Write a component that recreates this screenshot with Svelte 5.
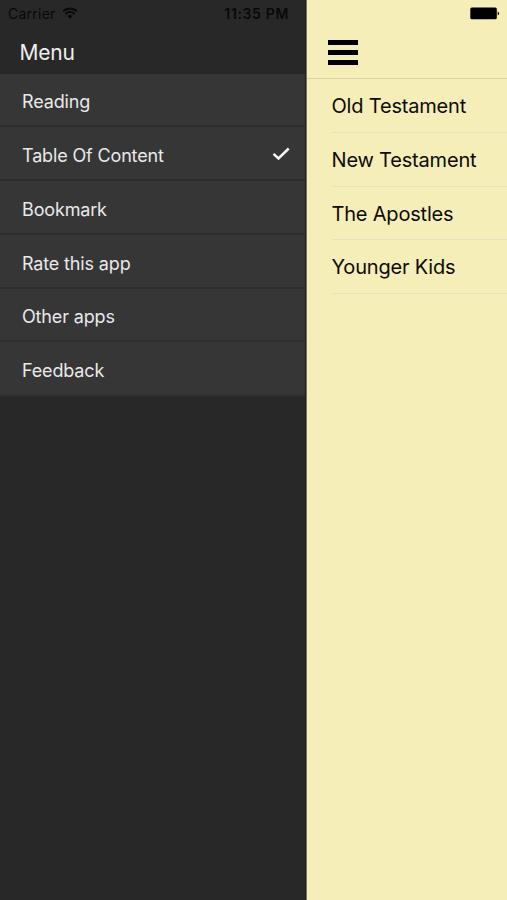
<script lang="ts">
	const menuItems = ['Reading', 'Table Of Content', 'Bookmark', 'Rate this app', 'Other apps', 'Feedback'];
	const sections = ['Old Testament', 'New Testament', 'The Apostles', 'Younger Kids'];

	let selected = $state('Table Of Content');
	let menuOpen = $state(true);
</script>

<div class="screen">
	{#if menuOpen}
		<aside class="drawer">
			<div class="status">
				<span class="carrier">Carrier</span>
				<svg class="wifi" viewBox="0 0 16 12" width="16" height="12">
					<path d="M1 4.3C5 .5 11 .5 15 4.3M3.5 6.9c2.7-2.5 6.3-2.5 9 0" />
					<path class="dot" d="M5.4 9.1c1.5-1.4 3.7-1.4 5.2 0L8 11.7z" />
				</svg>
				<span class="time">11:35 PM</span>
			</div>
			<h1 class="title">Menu</h1>
			<nav class="menu">
				{#each menuItems as item}
					<button class="menu-item" onclick={() => (selected = item)}>
						<span>{item}</span>
						{#if item === selected}
							<svg class="check" viewBox="0 0 18 14" width="18" height="14">
								<path d="M1.5 6.8l5 4.7L16.7 1.5" />
							</svg>
						{/if}
					</button>
				{/each}
			</nav>
		</aside>
	{/if}

	<main class="content">
		<header class="bar">
			<svg class="battery" viewBox="0 0 31 13" width="31" height="13">
				<rect x="1.3" y="0.5" width="26.5" height="11.7" rx="1.5" />
				<path d="M28.7 4.7c2 .5 2 3.1 0 3.6z" />
			</svg>
			<button class="toggle" aria-label="Toggle menu" onclick={() => (menuOpen = !menuOpen)}>
				<i></i>
				<i></i>
				<i></i>
			</button>
		</header>
		<ul class="sections">
			{#each sections as section}
				<li>{section}</li>
			{/each}
		</ul>
	</main>
</div>

<style>
	:global(body) {
		margin: 0;
	}

	.screen {
		display: flex;
		height: 100vh;
		overflow: hidden;
		font-family: Inter, 'Liberation Sans', sans-serif;
		background: #f5eeb9;
	}

	button {
		padding: 0;
		border: 0;
		background: none;
		font: inherit;
		cursor: pointer;
	}

	.drawer {
		flex: 0 0 307px;
		box-sizing: border-box;
		border-right: 1px solid #77755d;
		background: #282828;
		box-shadow: inset -1px 0 #20201c;
	}

	.status {
		display: flex;
		align-items: center;
		height: 27px;
		padding: 0 18px 0 8px;
		box-sizing: border-box;
		color: #080808;
		font-size: 14px;
	}

	.carrier {
		letter-spacing: 0.25px;
	}

	.wifi {
		margin-left: 6px;
		margin-top: -2px;
		fill: none;
		stroke: #080808;
		stroke-width: 2;
	}

	.wifi .dot {
		fill: #080808;
		stroke: none;
	}

	.time {
		margin-left: auto;
		font-weight: 600;
		letter-spacing: 0.65px;
		margin-right: -1px;
	}

	.title {
		height: 46.5px;
		margin: 0;
		padding-left: 19.5px;
		color: #efefef;
		font-size: 21px;
		font-weight: 400;
		letter-spacing: -0.2px;
		line-height: 51px;
	}

	.menu {
		margin-right: 1px;
	}

	.menu-item {
		display: flex;
		align-items: center;
		justify-content: space-between;
		width: 100%;
		height: 53.75px;
		box-sizing: border-box;
		padding: 5px 15px 0 22px;
		border-bottom: 2px solid #2e2e2e;
		background: #363636;
		color: #e9e9e9;
		font-size: 18px;
		letter-spacing: -0.15px;
	}

	.menu-item:last-child {
		border-bottom-color: #313131;
	}

	.check {
		margin-top: -3px;
		fill: none;
		stroke: #f4f4f4;
		stroke-width: 2.5;
	}

	.content {
		flex: 1;
		min-width: 0;
		color: #0c0b07;
	}

	.bar {
		display: flex;
		flex-direction: column;
		height: 79px;
		box-sizing: border-box;
		padding: 7px 7px 0 21px;
		border-bottom: 1px solid #d9d2a6;
	}

	.battery {
		align-self: flex-end;
		fill: #000;
	}

	.toggle {
		display: flex;
		flex-direction: column;
		gap: 5px;
		width: 30px;
		margin-top: 20px;
	}

	.toggle i {
		height: 5px;
		background: #000;
	}

	.sections {
		margin: 0;
		padding: 0 0 0 24.5px;
		list-style: none;
	}

	.sections li {
		height: 53.8px;
		box-sizing: border-box;
		border-bottom: 1px solid #e8dfc0;
		font-size: 20px;
		letter-spacing: -0.19px;
		line-height: 55px;
		white-space: nowrap;
	}
</style>
